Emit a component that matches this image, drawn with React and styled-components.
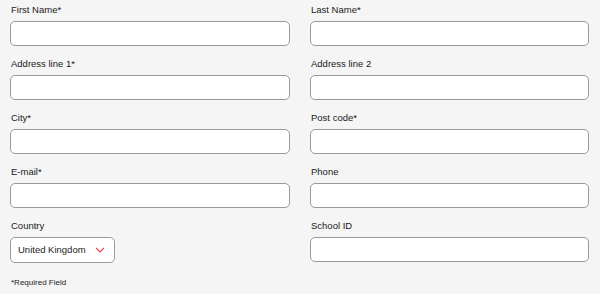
import React from 'react'
import styled, { createGlobalStyle } from 'styled-components'

const GlobalStyle = createGlobalStyle`
  html, body {
    margin: 0;
    padding: 0;
    background: #f5f5f5;
  }
  body {
    font-family: "Liberation Sans", Arial, sans-serif;
    color: #222;
  }
`

const Form = styled.form`
  width: 600px;
  height: 294px;
  box-sizing: border-box;
  padding: 0 11px 0 10px;
  background: #f5f5f5;
`

const Grid = styled.div`
  display: grid;
  grid-template-columns: 280px 279px;
  column-gap: 20px;
  row-gap: 8.5px;
`

const Field = styled.div`
  display: flex;
  flex-direction: column;
`

const Label = styled.label`
  font-size: 9.5px;
  line-height: 20px;
  height: 20.5px;
  padding-left: 1px;
  color: #1a1a1a;
`

const Input = styled.input`
  box-sizing: border-box;
  width: 100%;
  height: 25px;
  margin: 0;
  border: 1px solid #9a9a9a;
  border-radius: 5px;
  background: #fff;
  outline: none;
  font-family: inherit;
  font-size: 10px;
  padding: 0 7px;
`

const SelectBox = styled.div`
  box-sizing: border-box;
  width: 105px;
  height: 26px;
  border: 1px solid #9a9a9a;
  border-radius: 5px;
  background: #fff;
  display: flex;
  align-items: center;
  justify-content: space-between;
  padding: 0 9px 0 7px;
  font-size: 9.5px;
  color: #1a1a1a;
`

const Note = styled.p`
  margin: 15px 0 0 1px;
  font-size: 8px;
  color: #1a1a1a;
`

const fields = [
  ['First Name*', 'Last Name*'],
  ['Address line 1*', 'Address line 2'],
  ['City*', 'Post code*'],
  ['E-mail*', 'Phone'],
]

const Chevron = () => (
  <svg width="10" height="6" viewBox="0 0 10 6">
    <path d="M1 1 L5 5 L9 1" fill="none" stroke="#e8404f" strokeWidth="1.1" />
  </svg>
)

export default function App() {
  return (
    <>
      <GlobalStyle />
      <Form>
        <Grid>
          {fields.flat().map((label) => (
            <Field key={label}>
              <Label>{label}</Label>
              <Input type="text" />
            </Field>
          ))}
          <Field>
            <Label>Country</Label>
            <SelectBox>
              <span>United Kingdom</span>
              <Chevron />
            </SelectBox>
          </Field>
          <Field>
            <Label>School ID</Label>
            <Input type="text" />
          </Field>
        </Grid>
        <Note>*Required Field</Note>
      </Form>
    </>
  )
}
